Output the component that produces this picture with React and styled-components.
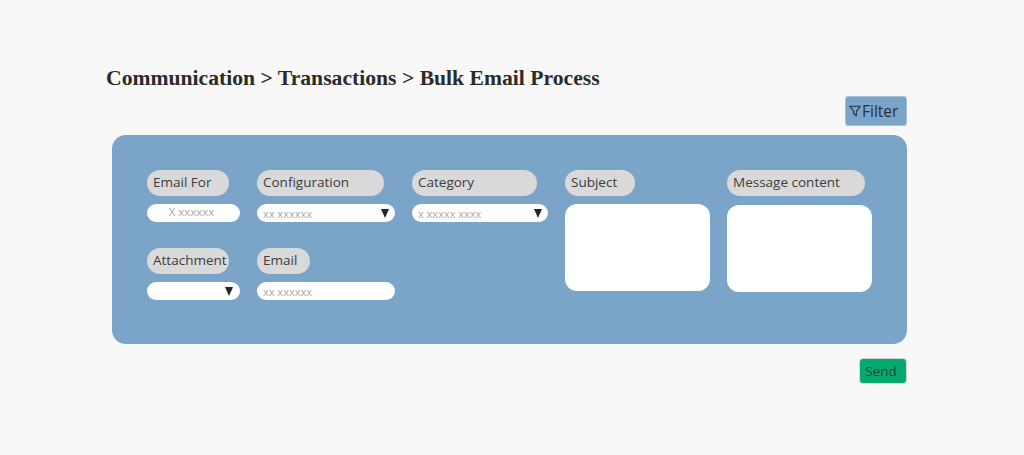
import React from 'react';
import styled, { createGlobalStyle } from 'styled-components';

const GlobalStyle = createGlobalStyle`
  html, body {
    margin: 0;
    padding: 0;
    background: #f8f8f8;
    font-family: "Open Sans", "Noto Sans", sans-serif;
  }
`;

const Page = styled.div`
  box-sizing: border-box;
  width: 1024px;
  height: 455px;
  padding: 65px 117px 0 106px;
  display: flex;
  flex-direction: column;
  overflow: hidden;
`;

const Title = styled.h1`
  margin: 0;
  height: 31px;
  font-family: "Liberation Serif", serif;
  font-size: 21.65px;
  line-height: 27px;
  font-weight: bold;
  color: #2b2b2b;
  white-space: nowrap;
`;

const ActionRow = styled.div`
  display: flex;
  justify-content: flex-end;
`;

const FilterButton = styled.button`
  box-sizing: border-box;
  width: 62px;
  height: 30px;
  padding: 0 0 0 3px;
  display: flex;
  align-items: center;
  gap: 1px;
  background: #7ba4c9;
  border: 1px solid #a9bfd3;
  border-radius: 3px;
  font-family: inherit;
  font-size: 15.5px;
  color: #25313c;
`;

const Panel = styled.section`
  box-sizing: border-box;
  margin: 9px 0 14px 6px;
  height: 209px;
  padding: 35px 0 0 35px;
  background: #7ba4c9;
  border-radius: 14px;
  display: flex;
  gap: 17px;
`;

const Column = styled.div`
  width: ${(p) => p.$width}px;
  display: flex;
  flex-direction: column;
  gap: 26px;
`;

const Field = styled.div`
  display: flex;
  flex-direction: column;
  align-items: flex-start;
  gap: ${(p) => p.$gap || 8}px;
`;

const Label = styled.label`
  box-sizing: border-box;
  width: ${(p) => p.$width}px;
  height: 26px;
  padding-left: 6px;
  background: #d9d9d9;
  border-radius: 13px;
  font-size: 13.5px;
  line-height: 25px;
  color: #3c3c3c;
  white-space: nowrap;
`;

const Pill = styled.div`
  box-sizing: border-box;
  width: 100%;
  height: 18px;
  padding: 0 ${(p) => p.$right || 6}px 0 6px;
  display: flex;
  align-items: center;
  justify-content: ${(p) => (p.$center ? 'center' : 'space-between')};
  background: #fff;
  border-radius: 9px;
  font-size: 11px;
  line-height: 18px;
  color: #a9a9a9;
  white-space: nowrap;
`;

const Value = styled.span`
  margin-top: 2px;
`;

const CenteredValue = styled.span`
  margin: 0 4px 3px 0;
  font-size: 11.5px;
`;

const Caret = styled.span`
  width: 0;
  height: 0;
  margin-left: auto;
  border-left: 4px solid transparent;
  border-right: 4px solid transparent;
  border-top: 9px solid #262626;
`;

const TextBox = styled.div`
  width: 100%;
  height: 87px;
  background: #fff;
  border-radius: 12px;
`;

const BottomRow = styled.div`
  display: flex;
  justify-content: flex-end;
`;

const SendButton = styled.button`
  box-sizing: border-box;
  width: 48px;
  height: 26px;
  padding: 0 4px 0 0;
  background: #04a96d;
  border: 1px solid #cfd8d3;
  border-radius: 4px;
  font-family: inherit;
  font-size: 13.5px;
  color: #1f4a3a;
`;

const FunnelIcon = () => (
  <svg width="12" height="12" viewBox="0 0 12 12" fill="none" stroke="#25313c" strokeWidth="1.1" strokeLinejoin="round">
    <path d="M.8 1.2h10.4L7.3 6.4v4.4L4.7 8.9V6.4z" />
  </svg>
);

const App = () => {
  return (
    <Page>
      <GlobalStyle />
      <Title>Communication &gt; Transactions &gt; Bulk Email Process</Title>
      <ActionRow>
        <FilterButton><FunnelIcon />Filter</FilterButton>
      </ActionRow>
      <Panel>
        <Column $width={93}>
          <Field>
            <Label $width={82}>Email For</Label>
            <Pill $center><CenteredValue>X xxxxxx</CenteredValue></Pill>
          </Field>
          <Field>
            <Label $width={82}>Attachment</Label>
            <Pill $right={7}><Caret /></Pill>
          </Field>
        </Column>
        <Column $width={138}>
          <Field>
            <Label $width={127}>Configuration</Label>
            <Pill><Value>xx xxxxxx</Value><Caret /></Pill>
          </Field>
          <Field>
            <Label $width={53}>Email</Label>
            <Pill><Value>xx xxxxxx</Value></Pill>
          </Field>
        </Column>
        <Column $width={136}>
          <Field>
            <Label $width={125}>Category</Label>
            <Pill><Value>x xxxxx xxxx</Value><Caret /></Pill>
          </Field>
        </Column>
        <Column $width={145}>
          <Field>
            <Label $width={70}>Subject</Label>
            <TextBox />
          </Field>
        </Column>
        <Column $width={145}>
          <Field $gap={9}>
            <Label $width={138}>Message content</Label>
            <TextBox />
          </Field>
        </Column>
      </Panel>
      <BottomRow>
        <SendButton>Send</SendButton>
      </BottomRow>
    </Page>
  );
};

export default App;
